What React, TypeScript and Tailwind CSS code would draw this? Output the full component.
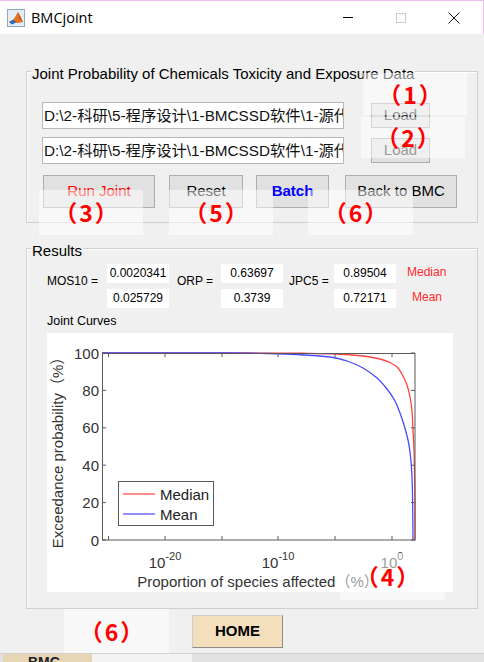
import React from 'react';

type Pt = [number, number];

// catmull-rom -> cubic bezier, keeps the curves smooth
const smooth = (p: Pt[]) => {
  let d = `M${p[0][0]},${p[0][1]}`;
  for (let i = 0; i < p.length - 1; i++) {
    const p0 = p[i - 1] || p[i];
    const p1 = p[i];
    const p2 = p[i + 1];
    const p3 = p[i + 2] || p2;
    const c1x = p1[0] + (p2[0] - p0[0]) / 6;
    const c1y = p1[1] + (p2[1] - p0[1]) / 6;
    const c2x = p2[0] - (p3[0] - p1[0]) / 6;
    const c2y = p2[1] - (p3[1] - p1[1]) / 6;
    d += ` C${c1x.toFixed(2)},${c1y.toFixed(2)} ${c2x.toFixed(2)},${c2y.toFixed(2)} ${p2[0]},${p2[1]}`;
  }
  return d;
};

const medianPts: Pt[] = [
  [55, 20], [200, 20], [260, 20.3], [283, 20.8], [305, 22], [320, 23.5], [333, 26],
  [343, 29.5], [351, 35], [356, 43], [360, 52], [363, 64], [365, 78], [366, 97],
  [367, 117], [367.5, 140], [368, 170], [368, 207]
];

const meanPts: Pt[] = [
  [55, 20], [180, 20], [220, 20.5], [250, 21.5], [283, 24], [300, 28], [316, 35],
  [330, 45], [340, 56], [348, 68], [353, 80], [357, 92], [361, 107], [363, 119],
  [364.5, 135], [365.5, 160], [366, 207]
];

const yTicks = [
  { v: '100', y: 20 },
  { v: '80', y: 57.4 },
  { v: '60', y: 94.8 },
  { v: '40', y: 132.2 },
  { v: '20', y: 169.6 },
  { v: '0', y: 207 }
];
const xTicks = [61.5, 118, 175, 231, 288, 345];
const xLabels = [
  { x: 118, e: '-20' },
  { x: 231, e: '-10' },
  { x: 345, e: '0' }
];

function JointPlot() {
  const axis = '#5a5a5a';
  return (
    <svg width="406" height="259" viewBox="0 0 406 259" className="block">
      <g fontFamily="'Liberation Sans', 'Noto Sans CJK SC', sans-serif" fill="#333">
        {/* curves */}
        <path d={smooth(medianPts)} fill="none" stroke="#ff4242" strokeWidth="1.3" />
        <path d={smooth(meanPts)} fill="none" stroke="#4a4aff" strokeWidth="1.3" />

        {/* box + ticks */}
        <rect x="55.5" y="20.5" width="312.5" height="186.5" fill="none" stroke={axis} strokeWidth="1" />
        {yTicks.map((t) => (
          <g key={t.v}>
            <line x1="55" x2="59" y1={t.y} y2={t.y} stroke={axis} />
            <line x1="364" x2="368" y1={t.y} y2={t.y} stroke={axis} />
            <text x="52" y={t.y + 5.5} textAnchor="end" fontSize="15">
              {t.v}
            </text>
          </g>
        ))}
        {xTicks.map((x) => (
          <g key={x}>
            <line x1={x} x2={x} y1="207" y2="203" stroke={axis} />
            <line x1={x} x2={x} y1="20" y2="24" stroke={axis} />
          </g>
        ))}
        {xLabels.map((l) => (
          <text key={l.e} x={l.x} y="235" textAnchor="middle" fontSize="15">
            10
            <tspan fontSize="11" dy="-8">
              {l.e}
            </tspan>
          </text>
        ))}

        <text x="211" y="254" textAnchor="middle" fontSize="15">
          Proportion of species affected（%）
        </text>
        <text
          x="0"
          y="0"
          textAnchor="middle"
          fontSize="15"
          transform="translate(16 116) rotate(-90)"
        >
          Exceedance probability（%）
        </text>

        {/* legend */}
        <rect x="71.5" y="148.5" width="95" height="44" fill="#fff" stroke={axis} />
        <line x1="76" x2="108" y1="161" y2="161" stroke="#ff4242" strokeWidth="1.2" />
        <line x1="76" x2="108" y1="181" y2="181" stroke="#4a4aff" strokeWidth="1.2" />
        <text x="113" y="166.5" fontSize="15" fill="#222">
          Median
        </text>
        <text x="113" y="186.5" fontSize="15" fill="#222">
          Mean
        </text>
      </g>
    </svg>
  );
}

function MatlabIcon() {
  return (
    <svg width="18" height="18" viewBox="0 0 18 18">
      <rect x="0.5" y="0.5" width="17" height="17" fill="#e4ecf4" stroke="#8ea6c2" />
      <path d="M2 13 L6.5 10.5 L11 3 L13.5 8 L16 13 L11 14 Z" fill="#e5731f" />
      <path d="M11 3 L13.5 8 L16 13 L12.5 9.5 Z" fill="#c9421a" />
      <path d="M2 13 L6.5 10.5 L9 13.5 L5 15.5 Z" fill="#2c6db5" />
    </svg>
  );
}

function TitleBar() {
  return (
    <div className="flex h-[34px] items-center border-t border-r border-[#efbcef] bg-white">
      <div className="ml-[7px]">
        <MatlabIcon />
      </div>
      <span className="ml-[6px] font-['Open_Sans','Noto_Sans',sans-serif] text-[14.5px] text-black">
        BMCjoint
      </span>
      <div className="ml-auto flex items-center">
        <div className="h-px w-[10px] bg-black" />
        <div className="ml-[43px] h-[10px] w-[10px] border border-[#cccccc]" />
        <svg width="12" height="12" viewBox="0 0 12 12" className="ml-[42px] mr-[23px]">
          <path d="M0.5 0.5 L11.5 11.5 M11.5 0.5 L0.5 11.5" stroke="#111" strokeWidth="1" />
        </svg>
      </div>
    </div>
  );
}

const pathText = 'D:\\2-科研\\5-程序设计\\1-BMCSSD软件\\1-源代码';

function PathField() {
  return (
    <div className="ml-[15px] h-[27px] w-[302px] overflow-hidden whitespace-nowrap border border-[#b7b7b7] bg-white px-[1px] text-[15.3px] leading-[25px] text-[#111]">
      {pathText}
    </div>
  );
}

function WinButton({
  children,
  className = ''
}: {
  children: React.ReactNode;
  className?: string;
}) {
  return (
    <div
      className={`flex h-[33px] items-center justify-center border border-[#adadad] bg-[#e1e1e1] text-[15px] ${className}`}
    >
      {children}
    </div>
  );
}

function ValueCol({ top, bottom }: { top: string; bottom: string }) {
  return (
    <div className="flex flex-col gap-[6px]">
      <div className="h-[19px] w-[62px] bg-white text-center text-[12px] leading-[19px]">{top}</div>
      <div className="h-[19px] w-[62px] bg-white text-center text-[12px] leading-[19px]">{bottom}</div>
    </div>
  );
}

function Note({
  label,
  className
}: {
  label: string;
  className: string;
}) {
  return (
    <div
      className={`absolute flex items-center justify-center bg-white/50 font-['Noto_Sans_CJK_SC',sans-serif] text-[23px] font-bold leading-none tracking-[2px] text-[#ff0000] ${className}`}
    >
      <span className="mr-[8px]">{label}</span>
    </div>
  );
}

export default function App() {
  return (
    <div className="relative h-[662px] w-[484px] overflow-hidden bg-[#f0f0f0] font-['Liberation_Sans','Noto_Sans_CJK_SC',sans-serif] text-black">
      <TitleBar />

      <div className="flex h-[619px] flex-col">
        {/* data group */}
        <div className="ml-[26px] mt-[37px] h-[152px] w-[452px] border border-[#d0d0d0] shadow-[inset_1px_1px_0_#fff]">
          <div className="ml-[4px] -mt-[7px] w-fit bg-[#f0f0f0] px-[1px] text-[15px] leading-[17px]">
            Joint Probability of Chemicals Toxicity and Exposure Data
          </div>

          <div className="mt-[20px] flex items-start">
            <PathField />
            <div className="ml-[27px] mt-[1px] flex h-[25px] w-[59px] items-center justify-center border border-[#adadad] bg-[#e1e1e1] text-[15px] text-[#333]">
              Load
            </div>
          </div>
          <div className="mt-[8px] flex items-start">
            <PathField />
            <div className="ml-[27px] mt-[1px] flex h-[25px] w-[59px] items-center justify-center border border-[#adadad] bg-[#e1e1e1] text-[15px] text-[#333]">
              Load
            </div>
          </div>

          <div className="mt-[11px] flex">
            <WinButton className="ml-[16px] w-[112px] text-[#ff0000]">Run Joint</WinButton>
            <WinButton className="ml-[14px] w-[74px]">Reset</WinButton>
            <WinButton className="ml-[13px] w-[73px] font-bold text-[#0000ff]">Batch</WinButton>
            <WinButton className="ml-[16px] w-[112px]">Back to BMC</WinButton>
          </div>
        </div>

        {/* results group */}
        <div className="ml-[26px] mt-[25px] h-[361px] w-[452px] border border-[#d0d0d0] shadow-[inset_1px_1px_0_#fff]">
          <div className="ml-[4px] -mt-[7px] w-fit bg-[#f0f0f0] px-[1px] text-[15px] leading-[17px]">
            Results
          </div>

          <div className="ml-[20px] mt-[5px] flex items-start text-[12px] leading-[14px]">
            <div className="w-[60px] pt-[10px]">MOS10 =</div>
            <ValueCol top="0.0020341" bottom="0.025729" />
            <div className="w-[52px] pl-[8px] pt-[10px]">ORP =</div>
            <ValueCol top="0.63697" bottom="0.3739" />
            <div className="w-[51px] pl-[6px] pt-[10px]">JPC5 =</div>
            <ValueCol top="0.89504" bottom="0.72171" />
            <div className="flex flex-col pl-[11px] text-[#ff2a2a]">
              <div className="h-[19px] leading-[17px]">Median</div>
              <div className="mt-[6px] h-[19px] pl-[5px] leading-[17px]">Mean</div>
            </div>
          </div>

          <div className="ml-[20px] mt-[6px] text-[12.5px] leading-[14px]">Joint Curves</div>

          <div className="ml-[20px] mt-[5px] h-[259px] w-[406px] bg-white">
            <JointPlot />
          </div>
        </div>

        <div className="ml-[192px] mt-[6px] flex h-[33px] w-[91px] items-center justify-center border border-[#cfcfcf] border-r-[#8c8c8c] border-b-[#8c8c8c] bg-[#f3dfbc] text-[15px] font-bold">
          HOME
        </div>
      </div>

      <div className="h-px bg-[#d2d2d2]" />
      <div className="flex h-[8px] bg-[#e2e2e2]">
        <div className="ml-[3px] w-[89px] overflow-hidden bg-[#e6d6b6]">
          <div className="ml-[25px] mt-[1px] text-[14px] font-bold leading-[14px] text-[#222]">BMC</div>
        </div>
        <div className="w-[100px] bg-[#f4f4f4]" />
      </div>

      {/* annotation overlays */}
      <Note label="（1）" className="left-[363px] top-[73px] h-[42px] w-[104px]" />
      <Note label="（2）" className="left-[361px] top-[117px] h-[41px] w-[104px]" />
      <Note label="（3）" className="left-[39px] top-[190px] h-[45px] w-[104px]" />
      <Note label="（5）" className="left-[169px] top-[190px] h-[45px] w-[104px]" />
      <Note label="（6）" className="left-[308px] top-[190px] h-[45px] w-[105px]" />
      <Note label="（4）" className="left-[340px] top-[553px] h-[47px] w-[105px]" />
      <Note label="（6）" className="left-[64px] top-[609px] h-[44px] w-[105px]" />
    </div>
  );
}
